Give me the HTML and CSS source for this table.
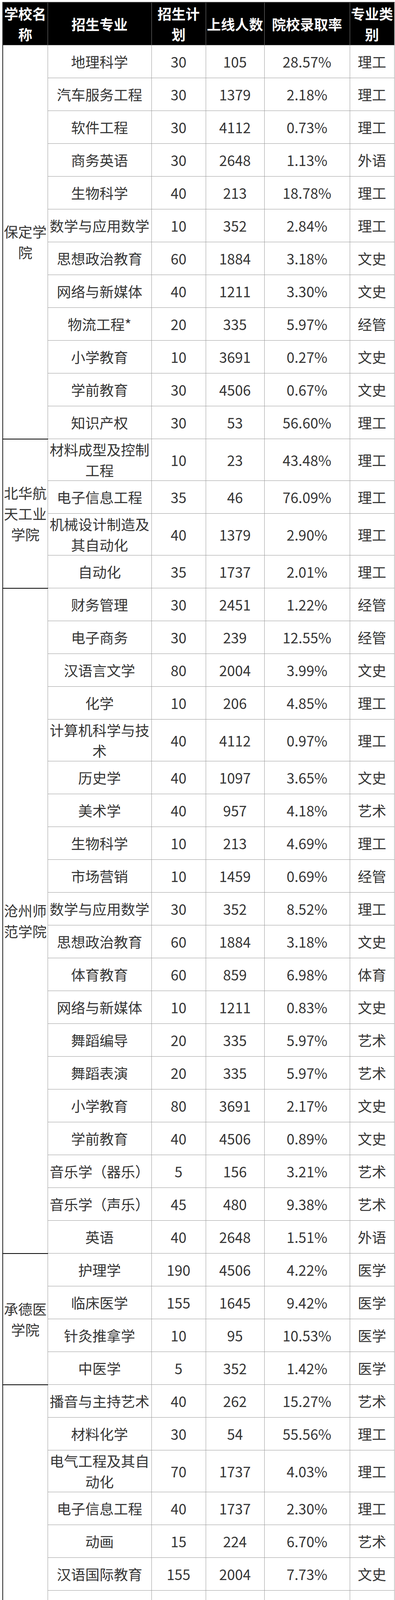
FILE: index.html
```html
<!DOCTYPE html>
<html lang="zh-CN">
<head>
<meta charset="utf-8">
<meta name="viewport" content="width=device-width, initial-scale=1">
<title>院校录取率</title>
<link rel="stylesheet" href="styles.css">
</head>
<body>
<table class="admit">
<colgroup>
<col class="c-school"><col class="c-major"><col class="c-plan"><col class="c-line"><col class="c-rate"><col class="c-type">
</colgroup>
<thead>
<tr><th class="school">学校名称</th><th>招生专业</th><th>招生计划</th><th>上线人数</th><th>院校录取率</th><th>专业类别</th></tr>
</thead>
<tbody>
<tr><td class="school" rowspan="12">保定学院</td><td>地理科学</td><td>30</td><td>105</td><td>28.57%</td><td>理工</td></tr>
<tr><td>汽车服务工程</td><td>30</td><td>1379</td><td>2.18%</td><td>理工</td></tr>
<tr><td>软件工程</td><td>30</td><td>4112</td><td>0.73%</td><td>理工</td></tr>
<tr><td>商务英语</td><td>30</td><td>2648</td><td>1.13%</td><td>外语</td></tr>
<tr><td>生物科学</td><td>40</td><td>213</td><td>18.78%</td><td>理工</td></tr>
<tr><td>数学与应用数学</td><td>10</td><td>352</td><td>2.84%</td><td>理工</td></tr>
<tr><td>思想政治教育</td><td>60</td><td>1884</td><td>3.18%</td><td>文史</td></tr>
<tr><td>网络与新媒体</td><td>40</td><td>1211</td><td>3.30%</td><td>文史</td></tr>
<tr><td>物流工程*</td><td>20</td><td>335</td><td>5.97%</td><td>经管</td></tr>
<tr><td>小学教育</td><td>10</td><td>3691</td><td>0.27%</td><td>文史</td></tr>
<tr><td>学前教育</td><td>30</td><td>4506</td><td>0.67%</td><td>文史</td></tr>
<tr><td>知识产权</td><td>30</td><td>53</td><td>56.60%</td><td>理工</td></tr>

<tr><td class="school" rowspan="4">北华航天工业学院</td><td>材料成型及控制工程</td><td>10</td><td>23</td><td>43.48%</td><td>理工</td></tr>
<tr><td>电子信息工程</td><td>35</td><td>46</td><td>76.09%</td><td>理工</td></tr>
<tr><td>机械设计制造及其自动化</td><td>40</td><td>1379</td><td>2.90%</td><td>理工</td></tr>
<tr><td>自动化</td><td>35</td><td>1737</td><td>2.01%</td><td>理工</td></tr>

<tr><td class="school" rowspan="20">沧州师范学院</td><td>财务管理</td><td>30</td><td>2451</td><td>1.22%</td><td>经管</td></tr>
<tr><td>电子商务</td><td>30</td><td>239</td><td>12.55%</td><td>经管</td></tr>
<tr><td>汉语言文学</td><td>80</td><td>2004</td><td>3.99%</td><td>文史</td></tr>
<tr><td>化学</td><td>10</td><td>206</td><td>4.85%</td><td>理工</td></tr>
<tr><td>计算机科学与技术</td><td>40</td><td>4112</td><td>0.97%</td><td>理工</td></tr>
<tr><td>历史学</td><td>40</td><td>1097</td><td>3.65%</td><td>文史</td></tr>
<tr><td>美术学</td><td>40</td><td>957</td><td>4.18%</td><td>艺术</td></tr>
<tr><td>生物科学</td><td>10</td><td>213</td><td>4.69%</td><td>理工</td></tr>
<tr><td>市场营销</td><td>10</td><td>1459</td><td>0.69%</td><td>经管</td></tr>
<tr><td>数学与应用数学</td><td>30</td><td>352</td><td>8.52%</td><td>理工</td></tr>
<tr><td>思想政治教育</td><td>60</td><td>1884</td><td>3.18%</td><td>文史</td></tr>
<tr><td>体育教育</td><td>60</td><td>859</td><td>6.98%</td><td>体育</td></tr>
<tr><td>网络与新媒体</td><td>10</td><td>1211</td><td>0.83%</td><td>文史</td></tr>
<tr><td>舞蹈编导</td><td>20</td><td>335</td><td>5.97%</td><td>艺术</td></tr>
<tr><td>舞蹈表演</td><td>20</td><td>335</td><td>5.97%</td><td>艺术</td></tr>
<tr><td>小学教育</td><td>80</td><td>3691</td><td>2.17%</td><td>文史</td></tr>
<tr><td>学前教育</td><td>40</td><td>4506</td><td>0.89%</td><td>文史</td></tr>
<tr><td>音乐学（器乐）</td><td>5</td><td>156</td><td>3.21%</td><td>艺术</td></tr>
<tr><td>音乐学（声乐）</td><td>45</td><td>480</td><td>9.38%</td><td>艺术</td></tr>
<tr><td>英语</td><td>40</td><td>2648</td><td>1.51%</td><td>外语</td></tr>

<tr><td class="school" rowspan="4">承德医学院</td><td>护理学</td><td>190</td><td>4506</td><td>4.22%</td><td>医学</td></tr>
<tr><td>临床医学</td><td>155</td><td>1645</td><td>9.42%</td><td>医学</td></tr>
<tr><td>针灸推拿学</td><td>10</td><td>95</td><td>10.53%</td><td>医学</td></tr>
<tr><td>中医学</td><td>5</td><td>352</td><td>1.42%</td><td>医学</td></tr>

<tr><td class="school" rowspan="27">邯郸学院</td><td>播音与主持艺术</td><td>40</td><td>262</td><td>15.27%</td><td>艺术</td></tr>
<tr><td>材料化学</td><td>30</td><td>54</td><td>55.56%</td><td>理工</td></tr>
<tr><td>电气工程及其自动化</td><td>70</td><td>1737</td><td>4.03%</td><td>理工</td></tr>
<tr><td>电子信息工程</td><td>40</td><td>1737</td><td>2.30%</td><td>理工</td></tr>
<tr><td>动画</td><td>15</td><td>224</td><td>6.70%</td><td>艺术</td></tr>
<tr><td>汉语国际教育</td><td>155</td><td>2004</td><td>7.73%</td><td>文史</td></tr>
<tr><td>化学</td><td>30</td><td>206</td><td>14.56%</td><td>理工</td></tr>
<tr><td>化学工程与工艺</td><td>30</td><td>171</td><td>17.54%</td><td>理工</td></tr>
<tr><td>环境设计</td><td>30</td><td>830</td><td>3.61%</td><td>艺术</td></tr>
<tr><td>机械设计制造及其自动化</td><td>60</td><td>1379</td><td>4.35%</td><td>理工</td></tr>
<tr><td>计算机科学与技术</td><td>30</td><td>4112</td><td>0.73%</td><td>理工</td></tr>
<tr><td>历史学</td><td>40</td><td>1097</td><td>3.65%</td><td>文史</td></tr>
<tr><td>旅游管理</td><td>120</td><td>445</td><td>26.97%</td><td>经管</td></tr>
<tr><td>美术学</td><td>80</td><td>957</td><td>8.36%</td><td>艺术</td></tr>
<tr><td>秘书学</td><td>120</td><td>591</td><td>20.30%</td><td>文史</td></tr>
<tr><td>软件工程</td><td>80</td><td>4112</td><td>1.95%</td><td>理工</td></tr>
<tr><td>社会体育指导与管理</td><td>30</td><td>859</td><td>3.49%</td><td>体育</td></tr>
<tr><td>食品科学与工程</td><td>60</td><td>355</td><td>16.90%</td><td>理工</td></tr>
<tr><td>视觉传达设计</td><td>30</td><td>606</td><td>4.95%</td><td>艺术</td></tr>
<tr><td>思想政治教育</td><td>80</td><td>1884</td><td>4.25%</td><td>文史</td></tr>
<tr><td>体育教育（太极拳方向）</td><td>30</td><td>859</td><td>3.49%</td><td>体育</td></tr>
<tr><td>网络工程</td><td>40</td><td>4112</td><td>0.97%</td><td>理工</td></tr>
<tr><td>舞蹈表演</td><td>40</td><td>335</td><td>11.94%</td><td>艺术</td></tr>
<tr><td>学前教育</td><td>90</td><td>4506</td><td>2.00%</td><td>文史</td></tr>
<tr><td>音乐学（器乐）</td><td>30</td><td>156</td><td>19.23%</td><td>艺术</td></tr>
<tr><td>音乐学（声乐）</td><td>60</td><td>480</td><td>12.50%</td><td>艺术</td></tr>
<tr><td>应用心理学</td><td>40</td><td>61</td><td>65.57%</td><td>文史</td></tr>
</tbody>
</table>
</body>
</html>
```
FILE: styles.css
```css
:root {
  --u: calc(100vw / 1012);
}

html, body {
  margin: 0;
  padding: 0;
  background: #fff;
}

.admit {
  margin: calc(5 * var(--u)) 0 0 calc(6 * var(--u));
  width: calc(1003 * var(--u));
  table-layout: fixed;
  border-collapse: collapse;
  font-family: "Noto Sans CJK SC", "Noto Sans", sans-serif;
  font-size: calc(36.5 * var(--u));
  color: #353535;
}

.c-school { width: calc(115 * var(--u)); }
.c-major { width: calc(266 * var(--u)); }
.c-plan { width: calc(139 * var(--u)); }
.c-line { width: calc(150 * var(--u)); }
.c-rate { width: calc(219 * var(--u)); }
.c-type { width: calc(114 * var(--u)); }

.admit th {
  background: #000;
  color: #fff;
  font-weight: 700;
  font-size: calc(36 * var(--u));
  line-height: calc(53 * var(--u));
  padding: var(--u) 0;
  border: var(--u) solid #808080;
  border-top: calc(2 * var(--u)) solid #333;
  text-align: center;
  vertical-align: middle;
}

.admit tbody tr {
  height: calc(84 * var(--u));
}

.admit td {
  line-height: calc(53 * var(--u));
  padding: 0 var(--u);
  border: var(--u) solid #9a9a9a;
  text-align: center;
  vertical-align: middle;
}

.admit th.school {
  border-left: calc(2 * var(--u)) solid #222;
}

.admit td.school {
  border-left: calc(2 * var(--u)) solid #222;
  border-bottom: calc(2 * var(--u)) solid #000;
}
```
